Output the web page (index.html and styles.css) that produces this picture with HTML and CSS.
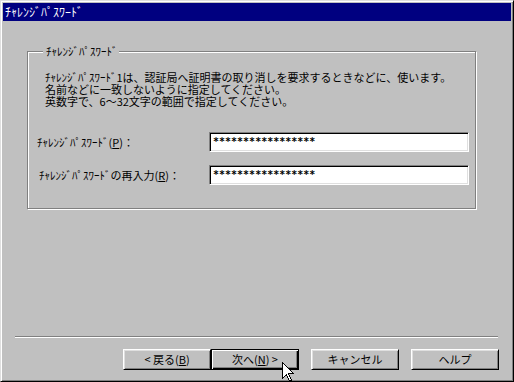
FILE: index.html
```html
<!DOCTYPE html>
<html lang="ja">
<head>
<meta charset="utf-8">
<title>ﾁｬﾚﾝｼﾞﾊﾟｽﾜｰﾄﾞ</title>
<link rel="stylesheet" href="styles.css">
</head>
<body>
<div class="window">
  <div class="titlebar">ﾁｬﾚﾝｼﾞﾊﾟｽﾜｰﾄﾞ</div>
  <div class="main">
    <fieldset class="group">
      <legend class="group-label">ﾁｬﾚﾝｼﾞﾊﾟｽﾜｰﾄﾞ</legend>
      <div class="desc">
        <div class="desc-line">ﾁｬﾚﾝｼﾞﾊﾟｽﾜｰﾄﾞ1は、認証局へ証明書の取り消しを要求するときなどに、使います。</div>
        <div class="desc-line">名前などに一致しないように指定してください。</div>
        <div class="desc-line">英数字で、6～32文字の範囲で指定してください。</div>
      </div>
      <div class="row row--first">
        <label class="field-label">ﾁｬﾚﾝｼﾞﾊﾟｽﾜｰﾄﾞ(<u>P</u>)：</label>
        <div class="input">*****************</div>
      </div>
      <div class="row row--second">
        <label class="field-label field-label--indent">ﾁｬﾚﾝｼﾞﾊﾟｽﾜｰﾄﾞの再入力(<u>R</u>)：</label>
        <div class="input">*****************</div>
      </div>
    </fieldset>
    <div class="spacer"></div>
    <div class="separator"></div>
    <div class="buttons">
      <button class="btn">&lt; 戻る(<u>B</u>)</button>
      <button class="btn btn--default">次へ(<u>N</u>) &gt;</button>
      <button class="btn btn--gap">キャンセル</button>
      <button class="btn btn--gap">ヘルプ</button>
    </div>
  </div>
</div>
<svg class="cursor" width="13" height="21" viewBox="0 0 13 21" shape-rendering="crispEdges">
  <path d="M0.5 0.5 L0.5 16.5 L4.5 12.5 L7.5 19.5 L9.5 18.5 L6.5 11.5 L11.5 11.5 Z" fill="#fff" stroke="#000" stroke-width="1"/>
</svg>
</body>
</html>
```
FILE: styles.css
```css
html, body {
  margin: 0;
  padding: 0;
}

body {
  width: 514px;
  height: 382px;
  overflow: hidden;
  position: relative;
  background: #c0c0c0;
  font-family: "Noto Sans CJK JP", sans-serif;
  font-size: 11px;
  color: #000;
}

.window {
  box-sizing: border-box;
  width: 514px;
  height: 382px;
  border: 1px solid;
  border-color: #dfdfdf #000 #000 #dfdfdf;
  box-shadow: inset 1px 1px 0 #fff, inset -1px -1px 0 #808080;
  padding: 2px;
  display: flex;
  flex-direction: column;
  background: #c0c0c0;
}

.titlebar {
  flex: none;
  height: 18px;
  line-height: 18px;
  background: #000080;
  color: #fff;
  font-size: 12px;
  padding-left: 2px;
  white-space: nowrap;
}

.main {
  flex: 1;
  display: flex;
  flex-direction: column;
}

.group {
  box-sizing: border-box;
  width: 449px;
  margin: 24px 0 0 24px;
  padding: 14px 0 23px 9px;
  border: 1px solid #808080;
  box-shadow: 1px 1px 0 #fff, inset 1px 1px 0 #fff;
  min-inline-size: 0;
}

.group-label {
  margin-left: 6px;
  padding: 0 1px 0 3px;
  line-height: 12px;
  font-size: 11px;
  background: #c0c0c0;
}

.desc {
  margin: 0 0 0 8px;
  display: flex;
  flex-direction: column;
}

.desc-line {
  height: 12px;
  line-height: 12px;
  white-space: nowrap;
}

.row {
  display: flex;
  align-items: center;
  height: 20px;
}

.row--first {
  margin-top: 25px;
}

.row--second {
  margin-top: 13px;
}

.field-label {
  box-sizing: border-box;
  flex: none;
  width: 172px;
  white-space: nowrap;
}

.field-label--indent {
  padding-left: 2px;
}

.input {
  box-sizing: border-box;
  flex: none;
  width: 260px;
  height: 20px;
  background: #fff;
  border: 1px solid;
  border-color: #808080 #fff #fff #808080;
  box-shadow: inset 1px 1px 0 #000, inset -1px -1px 0 #dfdfdf;
  padding-left: 3px;
  font-family: "DejaVu Sans Mono", monospace;
  font-weight: bold;
  font-size: 10px;
  line-height: 18px;
  color: #000;
}

.spacer {
  flex: 1;
}

.separator {
  flex: none;
  width: 483px;
  height: 0;
  margin-left: 12px;
  border-top: 1px solid #808080;
  border-bottom: 1px solid #fff;
}

.buttons {
  flex: none;
  display: flex;
  justify-content: flex-end;
  padding-right: 12px;
  margin: 11px 0 9px;
}

.btn {
  box-sizing: border-box;
  width: 88px;
  height: 21px;
  margin: 0;
  padding: 0;
  background: #c0c0c0;
  border: 1px solid;
  border-color: #fff #000 #000 #fff;
  box-shadow: inset 1px 1px 0 #dfdfdf, inset -1px -1px 0 #808080;
  font-family: "Noto Sans CJK JP", sans-serif;
  font-size: 11px;
  line-height: 19px;
  color: #000;
  text-align: center;
  white-space: nowrap;
}

.btn--default {
  border-color: #000;
  box-shadow: inset 1px 1px 0 #fff, inset -1px -1px 0 #000, inset -2px -2px 0 #808080;
}

.btn--gap {
  margin-left: 12px;
}

.cursor {
  position: absolute;
  left: 282px;
  top: 362px;
}
```
